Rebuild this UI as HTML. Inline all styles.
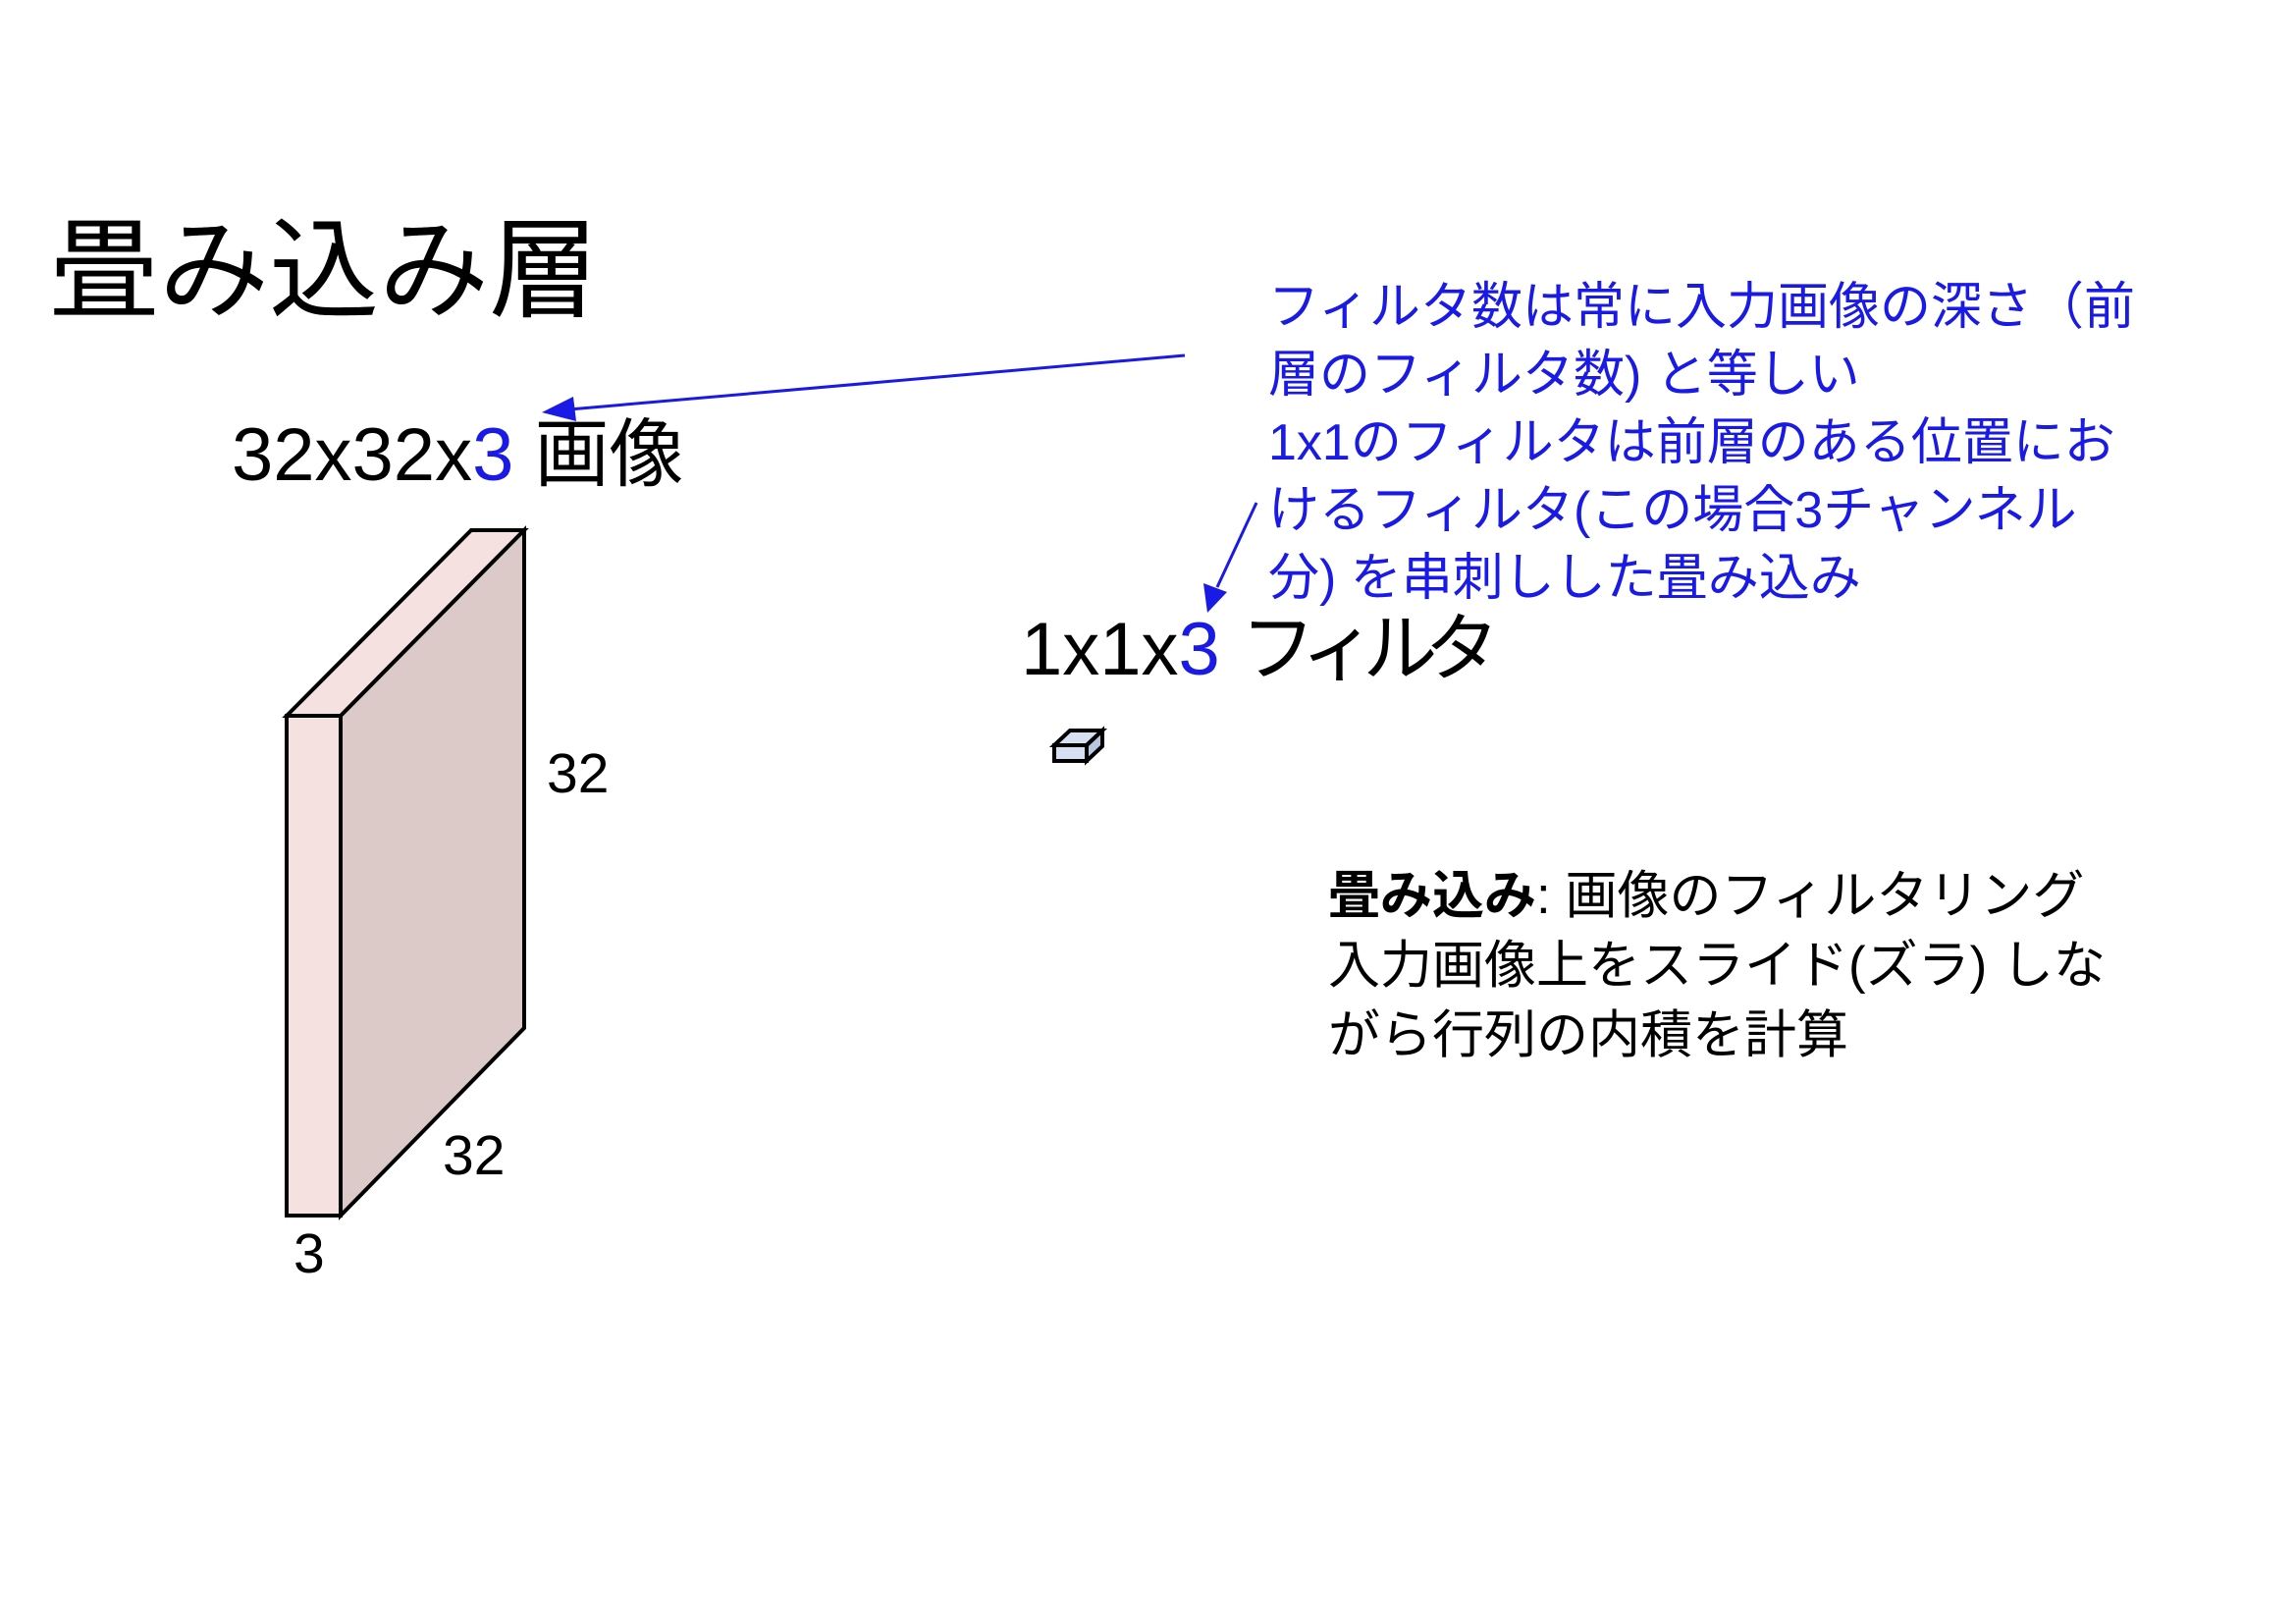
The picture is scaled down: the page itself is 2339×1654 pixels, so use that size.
<!DOCTYPE html>
<html><head><meta charset="utf-8"><style>
body{margin:0;width:2339px;height:1654px;background:#fff;position:relative;overflow:hidden;font-family:"Liberation Sans","Noto Sans CJK JP",sans-serif;color:#000}
.t{position:absolute;white-space:nowrap;line-height:1}
.b{color:#1a1ae6}
</style></head><body>
<div class="t" style="left:50px;top:220px;font-size:112px">畳み込み層</div>
<div class="t" style="left:236px;top:426px;font-size:76px">32x32x<span class="b">3</span> 画像</div>
<div class="t" style="left:1040px;top:624px;font-size:76px">1x1x<span class="b">3</span> <span style="letter-spacing:-13px">フィルタ</span></div>
<div class="t" style="left:557px;top:760px;font-size:57px">32</div>
<div class="t" style="left:451px;top:1149px;font-size:57px">32</div>
<div class="t" style="left:299px;top:1249px;font-size:57px">3</div>
<div class="t b" style="left:1292px;top:279px;font-size:52px;line-height:69px">フィルタ数は常に入力画像の深さ（前<br>層のフィルタ数) と等しい<br>1x1のフィルタは前層のある位置にお<br>けるフィルタ(この場合3チャンネル<br>分) を串刺しした畳み込み</div>
<div class="t" style="left:1353px;top:877px;font-size:53px;line-height:71px"><b>畳み込み</b>: 画像のフィルタリング<br>入力画像上をスライド(ズラ) しな<br>がら行列の内積を計算</div>
<svg width="2339" height="1654" style="position:absolute;left:0;top:0">
<g stroke="#000" stroke-width="4" stroke-linejoin="miter">
<polygon points="292,729 480,540 534,540 347,729" fill="#f5e1e0"/>
<polygon points="347,729 534,540 534,1047 347,1238" fill="#dccac8"/>
<rect x="292" y="729" width="55" height="509" fill="#f5e1e0"/>
<polygon points="1078,762 1094,747 1127,747 1111,762" fill="#d6e0f2" transform="translate(-4,-3)"/>
<polygon points="1111,762 1127,747 1127,763 1111,778" fill="#b8c6e0" transform="translate(-4,-3)"/>
<rect x="1074" y="759" width="33" height="16" fill="#d6e0f2"/>
</g>
<g stroke="#1a1ae6" stroke-width="3" fill="#1a1ae6">
<line x1="1207" y1="362" x2="580" y2="417"/>
<polygon points="552,420 584,404 587,429" stroke="none"/>
<line x1="1280" y1="512" x2="1240" y2="598"/>
<polygon points="1230,624 1226,594 1250,603" stroke="none"/>
</g>
</svg>
</body></html>
